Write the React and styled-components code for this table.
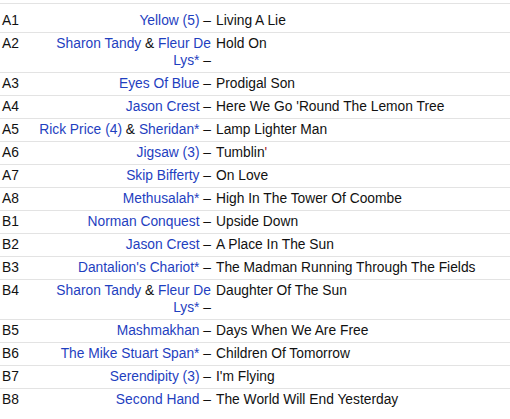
import React from "react";
import styled, { createGlobalStyle } from "styled-components";

const GlobalStyle = createGlobalStyle`
  body {
    margin: 0;
    background: #fff;
    font-family: "Liberation Sans", Arial, Helvetica, sans-serif;
    font-size: 13.8px;
    color: #111;
  }
`;

const Tracklist = styled.div`
  width: 510px;
  padding-top: 3px;
`;

const TopRule = styled.div`
  border-top: 1px solid #e3e3e3;
  height: 5px;
`;

const Row = styled.div`
  display: grid;
  grid-template-columns: 38px 173px 1fr;
  line-height: 17px;
  padding: 2px 0 3px;
  border-top: 1px solid ${p => (p.$first ? "transparent" : "#e3e3e3")};
`;

const Pos = styled.div`
  padding-left: 2px;
`;

const Artists = styled.div`
  text-align: right;
`;

const ArtistLink = styled.span`
  color: #1f3fbf;
`;

const Title = styled.div`
  padding-left: 5px;
`;

const Quote = styled.span`
  color: #a3251f;
`;

const tracks = [
  ["A1", [["Yellow (5)"]], "Living A Lie"],
  ["A2", [["Sharon Tandy", " & "], ["Fleur De Lys*"]], "Hold On"],
  ["A3", [["Eyes Of Blue"]], "Prodigal Son"],
  ["A4", [["Jason Crest"]], "Here We Go 'Round The Lemon Tree"],
  ["A5", [["Rick Price (4)", " & "], ["Sheridan*"]], "Lamp Lighter Man"],
  ["A6", [["Jigsaw (3)"]], <>Tumblin<Quote>'</Quote></>],
  ["A7", [["Skip Bifferty"]], "On Love"],
  ["A8", [["Methusalah*"]], "High In The Tower Of Coombe"],
  ["B1", [["Norman Conquest"]], "Upside Down"],
  ["B2", [["Jason Crest"]], "A Place In The Sun"],
  ["B3", [["Dantalion's Chariot*"]], "The Madman Running Through The Fields"],
  ["B4", [["Sharon Tandy", " & "], ["Fleur De Lys*"]], "Daughter Of The Sun"],
  ["B5", [["Mashmakhan"]], "Days When We Are Free"],
  ["B6", [["The Mike Stuart Span*"]], "Children Of Tomorrow"],
  ["B7", [["Serendipity (3)"]], "I'm Flying"],
  ["B8", [["Second Hand"]], "The World Will End Yesterday"],
];

export default function App() {
  return (
    <>
      <GlobalStyle />
      <Tracklist>
        <TopRule />
        {tracks.map(([pos, artists, title], i) => (
          <Row key={pos} $first={i === 0}>
            <Pos>{pos}</Pos>
            <Artists>
              {artists.map(([name, join]) => (
                <React.Fragment key={name}>
                  <ArtistLink>{name}</ArtistLink>
                  {join}
                </React.Fragment>
              ))}
              {" –"}
            </Artists>
            <Title>{title}</Title>
          </Row>
        ))}
      </Tracklist>
    </>
  );
}
